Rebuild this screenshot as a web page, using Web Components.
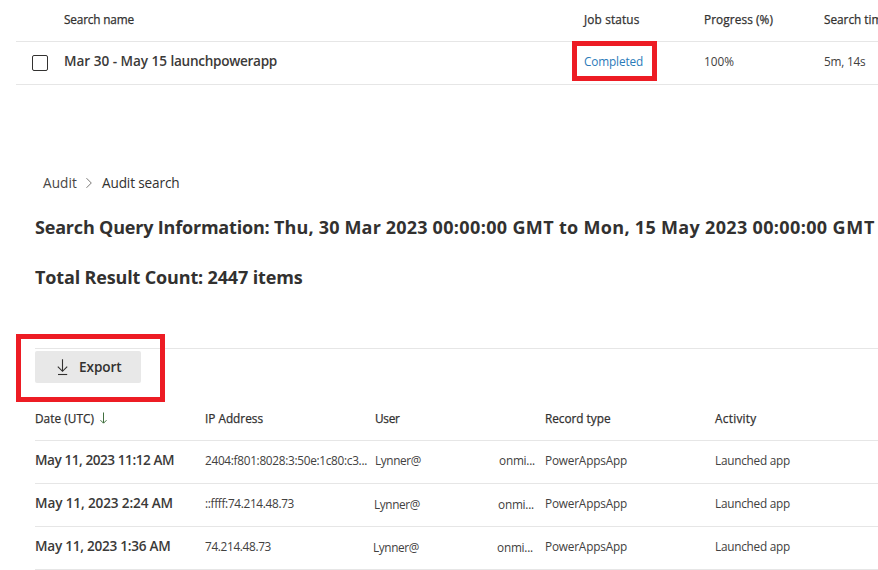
<!DOCTYPE html>
<html lang="en">
<head>
<meta charset="utf-8">
<title>Audit search</title>
<style>
html, body { margin: 0; height: 570px; overflow: hidden; background: #fff; }
body { font-family: "Open Sans", "Noto Sans", sans-serif; color: #323130; }
</style>
</head>
<body>
<audit-page></audit-page>
<script>
const define = (name, html, setup) => customElements.define(name, class extends HTMLElement {
  connectedCallback() {
    if (this.shadowRoot) return;
    this.attachShadow({ mode: 'open' }).innerHTML = html;
    if (setup) setup.call(this, this.shadowRoot);
  }
});

/* Single line of text; "w" is the width its letters are tracked to. */
define('fit-text', `<style>
:host { display: block; line-height: 20px; white-space: pre; font-size: 11.8px; color: #424140; }
:host([kind=head]) { color: #323130; font-size: 11.8px; -webkit-text-stroke: .25px #323130; }
:host([kind=name]) { font-weight: 600; font-size: 13.6px; color: #3b3a39; }
:host([kind=link]) { color: #2b7bb9; }
:host([kind=crumb]) { font-size: 13.6px; color: #484644; }
:host([kind=current]) { font-size: 13.6px; color: #323130; }
:host([kind=title]) { font-size: 18px; font-weight: 700; line-height: 26px; color: #323130; }
:host([kind=button]) { font-size: 13.6px; font-weight: 600; color: #323130; }
span { display: inline-block; }
</style><span><slot></slot></span>`, function (root) {
  const w = +this.getAttribute('w');
  const span = root.querySelector('span');
  const n = this.textContent.length;
  if (w) span.style.letterSpacing = (w - span.getBoundingClientRect().width) / n + 'px';
});

define('text-line', `<style>
:host { display: flex; }
</style><slot></slot>`);

define('check-box', `<style>
:host { display: block; box-sizing: border-box; width: 16px; height: 16px; border: 1px solid #323130; border-radius: 2px; }
</style>`);

define('table-row', `<style>
:host { display: grid; box-sizing: border-box; height: 43px; border-bottom: 1px solid #e6e6e6; align-items: start; padding-top: 9px; }
:host([head]) { height: 42px; padding-top: 10px; }
:host([jobs][head]) { padding-top: 9px; }
:host([jobs]) { grid-template-columns: 48px 520px 120px 120px 120px; }
:host([results]) { grid-template-columns: repeat(5, 170px); }
</style><slot></slot>`);

define('red-frame', `<style>
:host { position: absolute; box-sizing: border-box; border: 5px solid #ed1c24; pointer-events: none; }
</style>`);

define('export-button', `<style>
:host { display: flex; align-items: center; box-sizing: border-box; width: 106px; height: 32px; padding-left: 20px; gap: 9px; background: #e8e8e8; border-radius: 2px; }
svg { display: block; width: 15px; height: 18px; }
</style><svg viewBox="0 0 15 18" fill="none" stroke="#323130" stroke-width="1.1"><path d="M7.5 1.3V13M2.8 8.6L7.5 13.3L12.2 8.6"/><path d="M3 16.5H12.2"/></svg><slot></slot>`);

define('user-cell', `<style>
:host { display: flex; gap: 78px; }
:host([row="2"]) { margin: 1px 0 0 -1px; }
:host([row="3"]) { margin: 1px 0 0 -2px; }
</style><fit-text w="46">Lynner@</fit-text><fit-text w="36">onmi...</fit-text>`);

define('audit-page', `<style>
:host { display: block; position: relative; width: 878px; height: 570px; overflow: hidden; background: #fff; }
.jobs { margin-left: 16px; }
check-box { margin: 4px 0 0 16px; }
nav { display: flex; align-items: center; height: 20px; padding: 88px 0 0 43px; }
nav svg { width: 8px; height: 12px; margin: 0 9px 0 8px; }
.titles { padding: 21px 0 0 35px; }
.titles text-line + fit-text { margin-top: 24px; }
.results { margin: 58px 0 0 35px; border-top: 1px solid #e6e6e6; }
.bar { height: 47px; padding-top: 2px; }
.results table-row[head] { height: 43px; }
.date { display: flex; gap: 5px; }
.date svg { width: 8px; height: 12px; margin-top: 4px; }
</style>
<div class="jobs">
  <table-row jobs head><i></i><fit-text kind="head" w="70">Search name</fit-text><fit-text kind="head" w="55.5">Job status</fit-text><fit-text kind="head" w="69">Progress (%)</fit-text><fit-text kind="head" w="65">Search time</fit-text></table-row>
  <table-row jobs><check-box></check-box><text-line><fit-text kind="name" w="106.5">Mar 30 - May 15 </fit-text><fit-text kind="name" w="106.5">launchpowerapp</fit-text></text-line><fit-text kind="link" w="59">Completed</fit-text><fit-text w="30">100%</fit-text><fit-text w="41.5">5m, 14s</fit-text></table-row>
</div>
<nav><fit-text kind="crumb" w="34">Audit</fit-text><svg viewBox="0 0 8 12" fill="none" stroke="#797775"><path d="M1.5 1.2L6.3 6L1.5 10.8"/></svg><fit-text kind="current" w="77.5">Audit search</fit-text></nav>
<div class="titles">
  <text-line><fit-text kind="title" w="239">Search Query Information: </fit-text><fit-text kind="title" w="158.5">Thu, 30 Mar 2023 </fit-text><fit-text kind="title" w="80">00:00:00 </fit-text><fit-text kind="title" w="71">GMT to </fit-text><fit-text kind="title" w="169">Mon, 15 May 2023 </fit-text><fit-text kind="title" w="80">00:00:00 </fit-text><fit-text kind="title" w="42.5">GMT</fit-text></text-line>
  <fit-text kind="title" w="267.5">Total Result Count: 2447 items</fit-text>
</div>
<div class="results">
  <div class="bar"><export-button><fit-text kind="button" w="42.5">Export</fit-text></export-button></div>
  <table-row results head><div class="date"><fit-text kind="head" w="59">Date (UTC)</fit-text><svg viewBox="0 0 8 12" fill="none" stroke="#41703f"><path d="M4.5 .5V11M1.5 8.2L4.5 11.2L7.5 8.2"/></svg></div><fit-text kind="head" w="58">IP Address</fit-text><fit-text kind="head" w="24.5">User</fit-text><fit-text kind="head" w="65.5">Record type</fit-text><fit-text kind="head" w="41.5">Activity</fit-text></table-row>
  <table-row results><fit-text kind="name" w="139">May 11, 2023 11:12 AM</fit-text><fit-text w="162">2404:f801:8028:3:50e:1c80:c3...</fit-text><user-cell></user-cell><fit-text w="82">PowerAppsApp</fit-text><fit-text w="75">Launched app</fit-text></table-row>
  <table-row results><fit-text kind="name" w="138">May 11, 2023 2:24 AM</fit-text><fit-text w="89">::ffff:74.214.48.73</fit-text><user-cell row="2"></user-cell><fit-text w="82">PowerAppsApp</fit-text><fit-text w="75">Launched app</fit-text></table-row>
  <table-row results><fit-text kind="name" w="135.5">May 11, 2023 1:36 AM</fit-text><fit-text w="66">74.214.48.73</fit-text><user-cell row="3"></user-cell><fit-text w="82">PowerAppsApp</fit-text><fit-text w="75">Launched app</fit-text></table-row>
</div>
<red-frame style="left:572px;top:41px;width:85px;height:40px"></red-frame>
<red-frame style="left:16px;top:334px;width:149px;height:68px"></red-frame>`);
</script>
</body>
</html>
